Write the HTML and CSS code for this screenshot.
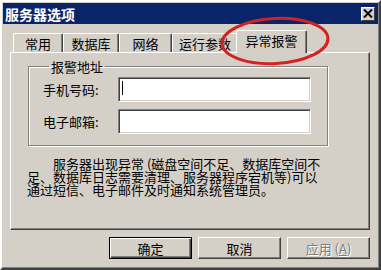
FILE: index.html
```html
<!DOCTYPE html>
<html lang="zh-CN">
<head>
    <meta charset="UTF-8">
    <meta name="viewport" content="width=device-width, initial-scale=1.0">
    <title>服务器选项</title>
    <link rel="stylesheet" href="styles.css">
</head>
<body>
    <div class="window">
        <div class="titlebar">
            <span class="title">服务器选项</span>
            <span class="close-btn">
                <svg width="10" height="9" viewBox="0 0 10 9">
                    <path d="M1 0.5 L9 8.5 M9 0.5 L1 8.5" stroke="#000" stroke-width="2" fill="none"/>
                </svg>
            </span>
        </div>

        <div class="tabs">
            <div class="tab tab-common">常用</div>
            <div class="tab tab-db">数据库</div>
            <div class="tab tab-net">网络</div>
            <div class="tab tab-run">运行参数</div>
            <div class="tab tab-alarm active">异常报警</div>
        </div>

        <div class="panel">
            <fieldset class="group">
                <legend>报警地址</legend>
                <div class="field-row">
                    <label>手机号码:</label>
                    <div class="text-box"><span class="caret"></span></div>
                </div>
                <div class="field-row">
                    <label>电子邮箱:</label>
                    <div class="text-box"></div>
                </div>
            </fieldset>

            <p class="note">
                <span class="indent">服务器出现异常 (磁盘空间不足、数据库空间不</span><br>
                足、数据库日志需要清理、服务器程序宕机等)可以<br>
                通过短信、电子邮件及时通知系统管理员。
            </p>
        </div>

        <div class="buttons">
            <button class="btn btn-default">确定</button>
            <button class="btn">取消</button>
            <button class="btn" disabled>应用 (<u>A</u>)</button>
        </div>

        <!-- red annotation ring drawn over the active tab -->
        <svg class="annotation" width="120" height="60" viewBox="0 0 120 60">
            <ellipse cx="60" cy="30" rx="53" ry="22.5" transform="rotate(-3 60 30)"
                     fill="none" stroke="#d42222" stroke-width="3"/>
        </svg>
    </div>
</body>
</html>
```

FILE: styles.css
```css
body {
    margin: 0;
    font-family: "Noto Sans CJK SC", "Liberation Sans", sans-serif;
    font-size: 13px;
    color: #000;
}

.window {
    position: relative;
    box-sizing: border-box;
    width: 381px;
    height: 270px;
    padding: 1px;
    background: #d4d0c8;
    border: 2px solid;
    border-color: #ffffff #404040 #404040 #ffffff;
    box-shadow: inset -1px -1px 0 #808080;
}

.titlebar {
    display: flex;
    align-items: center;
    justify-content: space-between;
    height: 21px;
    padding: 0 3px 0 2px;
    background: #0a246a;
}

.title {
    color: #fff;
    font-weight: bold;
    font-size: 14px;
    line-height: 14px;
}

.close-btn {
    display: flex;
    align-items: center;
    justify-content: center;
    box-sizing: border-box;
    width: 14px;
    height: 14px;
    background: #d4d0c8;
    border: 1px solid;
    border-color: #ffffff #404040 #404040 #ffffff;
}

.tabs {
    display: flex;
    align-items: flex-end;
    height: 22px;
    margin-top: 6px;
    padding-left: 10px;
}

.tab {
    box-sizing: border-box;
    height: 19px;
    display: flex;
    align-items: center;
    justify-content: center;
    line-height: 13px;
    padding-top: 1px;
    border: 1px solid;
    border-bottom: none;
    border-color: #ffffff #404040 #ffffff #ffffff;
    border-radius: 2px 2px 0 0;
    box-shadow: inset -1px 0 0 #808080;
}

.tab-common { width: 50px; }
.tab-db { width: 56px; }
.tab-net { width: 53px; }
.tab-run { width: 66px; }
.tab-alarm { width: 67px; }

.tab.active {
    position: relative;
    z-index: 1;
    width: 71px;
    height: 23px;
    margin: 0 -2px -1px -2px;
    padding-top: 0;
    padding-bottom: 3px;
    background: #d4d0c8;
}

.panel {
    box-sizing: border-box;
    height: 178px;
    margin: 0 8px 0 7px;
    border: 1px solid;
    border-color: #ffffff #404040 #404040 #ffffff;
    box-shadow: inset -1px -1px 0 #808080;
}

.group {
    box-sizing: border-box;
    width: 300px;
    margin: 7px 0 0 17px;
    padding: 4px 0 11px 14px;
    border: 1px solid #808080;
    box-shadow: 1px 1px 0 #fff, inset 1px 1px 0 #fff;
}

.group legend {
    margin-left: 6px;
    padding: 0 2px;
    line-height: 13px;
}

.field-row {
    display: flex;
    align-items: center;
    margin-bottom: 7px;
}

.field-row:last-child {
    margin-bottom: 0;
}

.field-row label {
    width: 75px;
    line-height: 13px;
}

.text-box {
    box-sizing: border-box;
    width: 193px;
    height: 25px;
    padding: 2px 2px;
    background: #fff;
    border: 1px solid;
    border-color: #808080 #ffffff #ffffff #808080;
    box-shadow: inset 1px 1px 0 #404040, inset -1px -1px 0 #d4d0c8;
}

.caret {
    display: block;
    width: 1px;
    height: 14px;
    margin: 1px 0 0 1px;
    background: #000;
}

.note {
    margin: 11px 0 0 0;
    padding-left: 16px;
    line-height: 13px;
    white-space: nowrap;
}

.indent {
    padding-left: 26px;
}

.buttons {
    display: flex;
    justify-content: flex-end;
    gap: 6px;
    margin-top: 7px;
    padding-right: 8px;
}

.btn {
    box-sizing: border-box;
    width: 83px;
    height: 22px;
    padding: 0;
    font-family: inherit;
    font-size: 13px;
    line-height: 13px;
    color: #000;
    background: #d4d0c8;
    border: 1px solid;
    border-color: #ffffff #404040 #404040 #ffffff;
    box-shadow: inset -1px -1px 0 #808080;
}

.btn-default {
    border: 1px solid #000;
    box-shadow: inset 1px 1px 0 #fff, inset -1px -1px 0 #404040, inset -2px -2px 0 #808080;
}

.btn:disabled {
    color: #808080;
    text-shadow: 1px 1px 0 #fff;
}

.annotation {
    position: absolute;
    left: 213px;
    top: 9px;
}
```
